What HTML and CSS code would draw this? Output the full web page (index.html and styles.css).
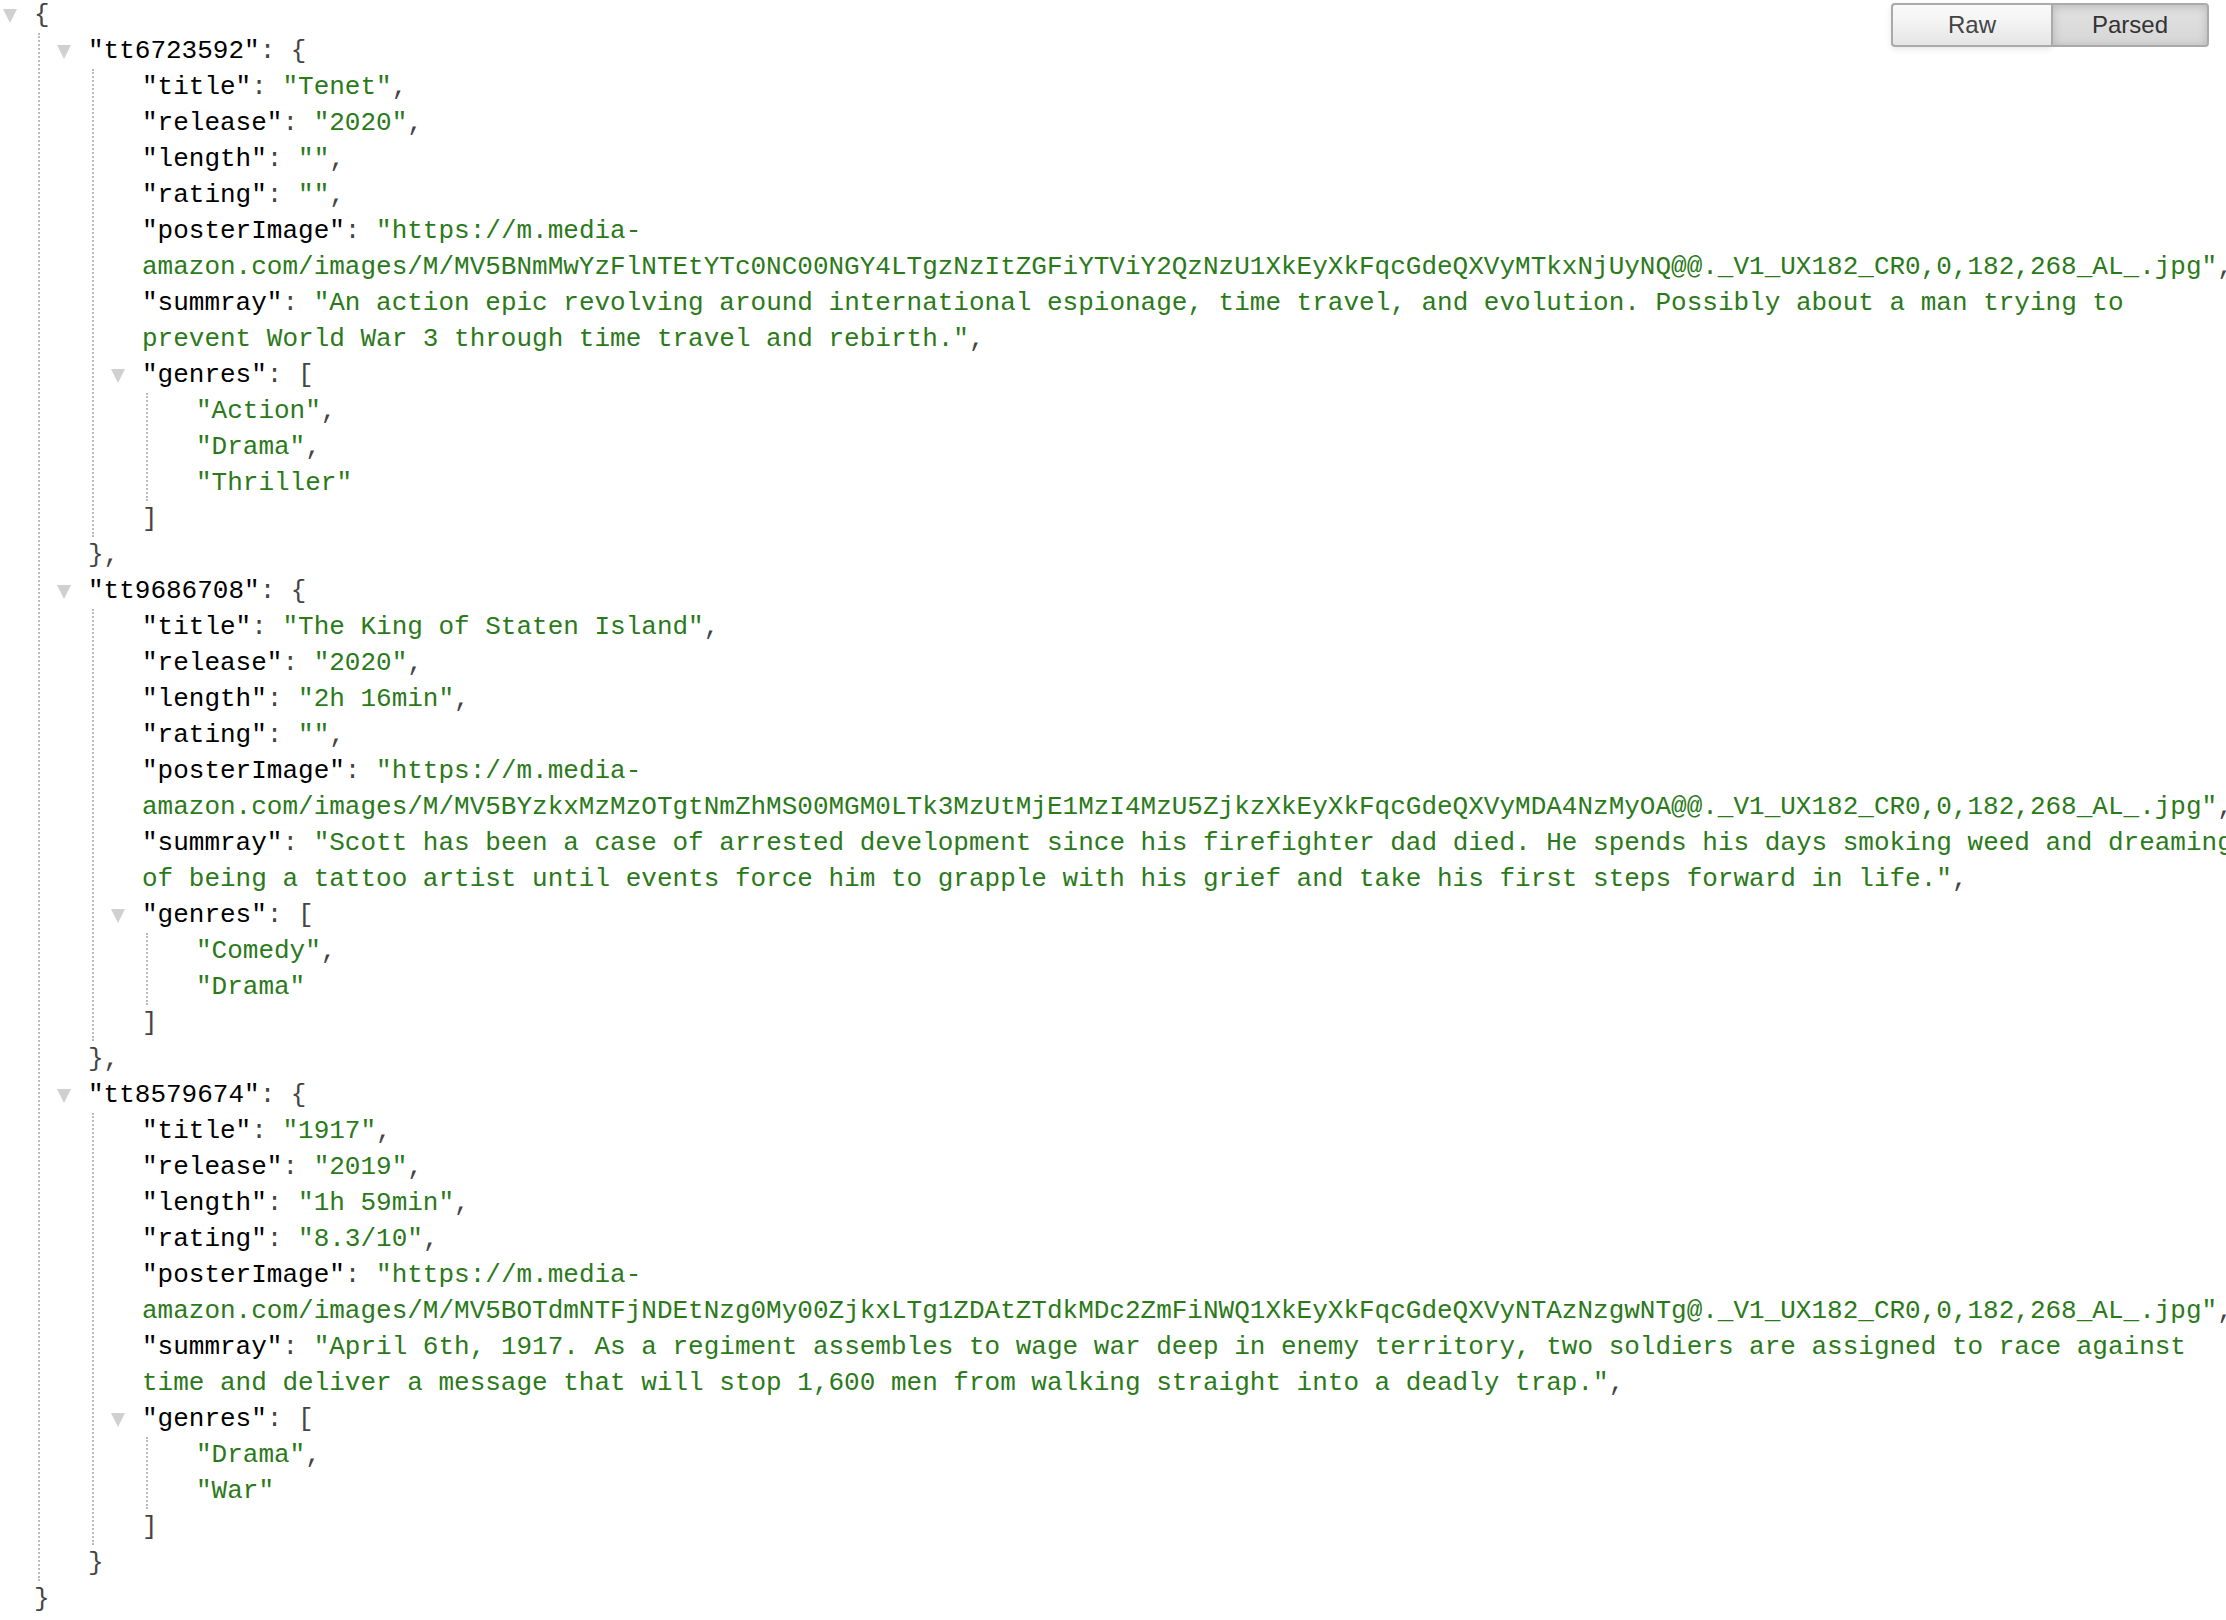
FILE: index.html
```html
<!DOCTYPE html>
<html lang="en">
<head>
<meta charset="utf-8">
<title>JSON</title>
<link rel="stylesheet" href="styles.css">
</head>
<body>
<div class="bar"><span class="btn raw">Raw</span><span class="btn parsed">Parsed</span></div>
<div class="json">
<div class="kv"><span class="e"></span><span class="p">{</span>
<div class="inner">
<div class="kv"><span class="e"></span><span class="k">"tt6723592"</span><span class="p">: {</span>
<div class="inner">
<div class="kv"><span class="k">"title"</span><span class="p">: </span><span class="s">"Tenet"</span><span class="p">,</span></div>
<div class="kv"><span class="k">"release"</span><span class="p">: </span><span class="s">"2020"</span><span class="p">,</span></div>
<div class="kv"><span class="k">"length"</span><span class="p">: </span><span class="s">""</span><span class="p">,</span></div>
<div class="kv"><span class="k">"rating"</span><span class="p">: </span><span class="s">""</span><span class="p">,</span></div>
<div class="kv"><span class="k">"posterImage"</span><span class="p">: </span><span class="s">"https://m.media-amazon.com/images/M/MV5BNmMwYzFlNTEtYTc0NC00NGY4LTgzNzItZGFiYTViY2QzNzU1XkEyXkFqcGdeQXVyMTkxNjUyNQ@@._V1_UX182_CR0,0,182,268_AL_.jpg"</span><span class="p">,</span></div>
<div class="kv"><span class="k">"summray"</span><span class="p">: </span><span class="s">"An action epic revolving around international espionage, time travel, and evolution. Possibly about a man trying to prevent World War 3 through time travel and rebirth."</span><span class="p">,</span></div>
<div class="kv"><span class="e"></span><span class="k">"genres"</span><span class="p">: [</span>
<div class="inner">
<div class="kv"><span class="s">"Action"</span><span class="p">,</span></div>
<div class="kv"><span class="s">"Drama"</span><span class="p">,</span></div>
<div class="kv"><span class="s">"Thriller"</span></div>
</div><span class="p">]</span></div>
</div><span class="p">},</span></div>
<div class="kv"><span class="e"></span><span class="k">"tt9686708"</span><span class="p">: {</span>
<div class="inner">
<div class="kv"><span class="k">"title"</span><span class="p">: </span><span class="s">"The King of Staten Island"</span><span class="p">,</span></div>
<div class="kv"><span class="k">"release"</span><span class="p">: </span><span class="s">"2020"</span><span class="p">,</span></div>
<div class="kv"><span class="k">"length"</span><span class="p">: </span><span class="s">"2h 16min"</span><span class="p">,</span></div>
<div class="kv"><span class="k">"rating"</span><span class="p">: </span><span class="s">""</span><span class="p">,</span></div>
<div class="kv"><span class="k">"posterImage"</span><span class="p">: </span><span class="s">"https://m.media-amazon.com/images/M/MV5BYzkxMzMzOTgtNmZhMS00MGM0LTk3MzUtMjE1MzI4MzU5ZjkzXkEyXkFqcGdeQXVyMDA4NzMyOA@@._V1_UX182_CR0,0,182,268_AL_.jpg"</span><span class="p">,</span></div>
<div class="kv"><span class="k">"summray"</span><span class="p">: </span><span class="s">"Scott has been a case of arrested development since his firefighter dad died. He spends his days smoking weed and dreaming of being a tattoo artist until events force him to grapple with his grief and take his first steps forward in life."</span><span class="p">,</span></div>
<div class="kv"><span class="e"></span><span class="k">"genres"</span><span class="p">: [</span>
<div class="inner">
<div class="kv"><span class="s">"Comedy"</span><span class="p">,</span></div>
<div class="kv"><span class="s">"Drama"</span></div>
</div><span class="p">]</span></div>
</div><span class="p">},</span></div>
<div class="kv"><span class="e"></span><span class="k">"tt8579674"</span><span class="p">: {</span>
<div class="inner">
<div class="kv"><span class="k">"title"</span><span class="p">: </span><span class="s">"1917"</span><span class="p">,</span></div>
<div class="kv"><span class="k">"release"</span><span class="p">: </span><span class="s">"2019"</span><span class="p">,</span></div>
<div class="kv"><span class="k">"length"</span><span class="p">: </span><span class="s">"1h 59min"</span><span class="p">,</span></div>
<div class="kv"><span class="k">"rating"</span><span class="p">: </span><span class="s">"8.3/10"</span><span class="p">,</span></div>
<div class="kv"><span class="k">"posterImage"</span><span class="p">: </span><span class="s">"https://m.media-amazon.com/images/M/MV5BOTdmNTFjNDEtNzg0My00ZjkxLTg1ZDAtZTdkMDc2ZmFiNWQ1XkEyXkFqcGdeQXVyNTAzNzgwNTg@._V1_UX182_CR0,0,182,268_AL_.jpg"</span><span class="p">,</span></div>
<div class="kv"><span class="k">"summray"</span><span class="p">: </span><span class="s">"April 6th, 1917. As a regiment assembles to wage war deep in enemy territory, two soldiers are assigned to race against time and deliver a message that will stop 1,600 men from walking straight into a deadly trap."</span><span class="p">,</span></div>
<div class="kv"><span class="e"></span><span class="k">"genres"</span><span class="p">: [</span>
<div class="inner">
<div class="kv"><span class="s">"Drama"</span><span class="p">,</span></div>
<div class="kv"><span class="s">"War"</span></div>
</div><span class="p">]</span></div>
</div><span class="p">}</span></div>
</div><span class="p">}</span></div>
</div>
</body>
</html>
```
FILE: styles.css
```css
html, body {
  margin: 0;
  padding: 0;
  background: #fff;
  overflow: hidden;
}

body {
  position: relative;
}

.json {
  font-family: "Liberation Mono", "DejaVu Sans Mono", monospace;
  font-size: 26px;
  line-height: 36px;
  color: #444;
  /* two levels of indentation (54px each) + 134 monospace columns */
  width: calc(108px + 134.2ch);
  padding-left: 34px;
  margin-top: -3px;
}

.kv {
  display: block;
  position: relative;
  padding-left: 40px;
  margin-left: -40px;
}

.e {
  position: absolute;
  left: 9px;
  top: 12px;
  width: 0;
  height: 0;
  border-left: 7px solid transparent;
  border-right: 7px solid transparent;
  border-top: 14px solid #d0d0d0;
}

.inner {
  margin-left: 4px;
  border-left: 2px dotted #bbb;
  padding-left: 48px;
}

.k {
  color: #000;
}

.s {
  color: #2b7a1a;
}

.bar {
  position: absolute;
  top: 3px;
  right: 17px;
  display: flex;
  z-index: 10;
  font-family: "Liberation Sans", Arial, sans-serif;
  font-size: 24px;
}

.btn {
  box-sizing: border-box;
  height: 44px;
  border: 2px solid #aaa;
  display: flex;
  align-items: center;
  justify-content: center;
  color: #444;
}

.raw {
  width: 160px;
  border-right: none;
  border-radius: 4px 0 0 4px;
  background: linear-gradient(#fafafa, #f4f4f4 40%, #e5e5e5);
  box-shadow: 0 2px 6px rgba(0, 0, 0, 0.1);
}

.parsed {
  width: 158px;
  border-radius: 0 4px 4px 0;
  background: linear-gradient(#e2e2e2, #d6d6d6);
  box-shadow: inset 0 2px 10px rgba(0, 0, 0, 0.18);
  color: #333;
}
```
